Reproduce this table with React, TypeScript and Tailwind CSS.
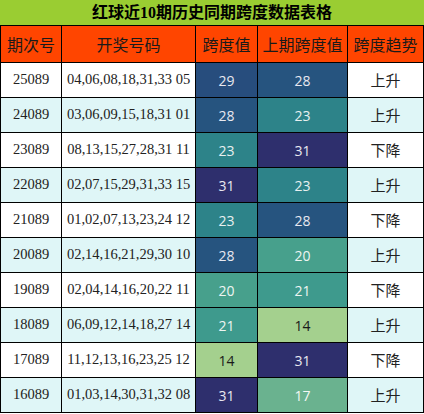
import React from "react";

const rows = [
  ["25089", "04,06,08,18,31,33 05", 29, 28, "上升"],
  ["24089", "03,06,09,15,18,31 01", 28, 23, "上升"],
  ["23089", "08,13,15,27,28,31 11", 23, 31, "下降"],
  ["22089", "02,07,15,29,31,33 15", 31, 23, "上升"],
  ["21089", "01,02,07,13,23,24 12", 23, 28, "下降"],
  ["20089", "02,14,16,21,29,30 10", 28, 20, "上升"],
  ["19089", "02,04,14,16,20,22 11", 20, 21, "下降"],
  ["18089", "06,09,12,14,18,27 14", 21, 14, "上升"],
  ["17089", "11,12,13,16,23,25 12", 14, 31, "下降"],
  ["16089", "01,03,14,30,31,32 08", 31, 17, "上升"],
] as const;

function cellClass(v: number): string {
  switch (v) {
    case 31:
      return "bg-[#2e2f6d] text-[#e8e8f0]";
    case 29:
      return "bg-[#274d7d] text-[#e8e8f0]";
    case 28:
      return "bg-[#26547f] text-[#e8e8f0]";
    case 23:
      return "bg-[#2d8389] text-[#e8f0f0]";
    case 21:
      return "bg-[#3e9a8d] text-[#eef5f2]";
    case 20:
      return "bg-[#47a08c] text-[#eef5f2]";
    case 17:
      return "bg-[#6ab28f] text-[#f4f8f4]";
    case 14:
      return "bg-[#a4d08e] text-[#1a1a1a]";
    default:
      return "bg-white";
  }
}

const serif = "font-['Liberation_Serif',serif]";
const cjk = "font-['Noto_Sans_CJK_SC',sans-serif]";
const sans = "font-['Open_Sans',sans-serif]";

export default function App() {
  return (
    <div className="w-[424px] h-[414px] bg-white">
      <div className="w-[424px] bg-black">
        <div className="h-[25px] bg-[#9acd32] flex items-center justify-center text-[16px] font-bold text-black font-['Liberation_Serif','Noto_Sans_CJK_SC',serif]">
          红球近10期历史同期跨度数据表格
        </div>
        <div className="grid grid-cols-[60px_133px_61px_89px_75px] gap-px p-px">
          {["期次号", "开奖号码", "跨度值", "上期跨度值", "跨度趋势"].map((h) => (
            <div
              key={h}
              className={`h-[36px] bg-[#ff4500] flex items-center justify-center text-[16px] text-[#1a1a1a] ${cjk}`}
            >
              {h}
            </div>
          ))}
          {rows.map((r, i) => {
            const bg = i % 2 === 0 ? "bg-white" : "bg-[#dff6f7]";
            return (
              <React.Fragment key={r[0]}>
                <div className={`h-[34px] ${bg} flex items-center justify-center text-[14.5px] text-[#222] ${serif}`}>
                  {r[0]}
                </div>
                <div className={`h-[34px] ${bg} flex items-center justify-center text-[14.5px] text-[#222] ${serif}`}>
                  {r[1]}
                </div>
                <div className={`h-[34px] ${cellClass(r[2])} flex items-center justify-center text-[14px] ${sans}`}>
                  {r[2]}
                </div>
                <div className={`h-[34px] ${cellClass(r[3])} flex items-center justify-center text-[14px] ${sans}`}>
                  {r[3]}
                </div>
                <div className={`h-[34px] ${bg} flex items-center justify-center text-[15px] text-[#222] ${cjk}`}>
                  {r[4]}
                </div>
              </React.Fragment>
            );
          })}
        </div>
      </div>
    </div>
  );
}
